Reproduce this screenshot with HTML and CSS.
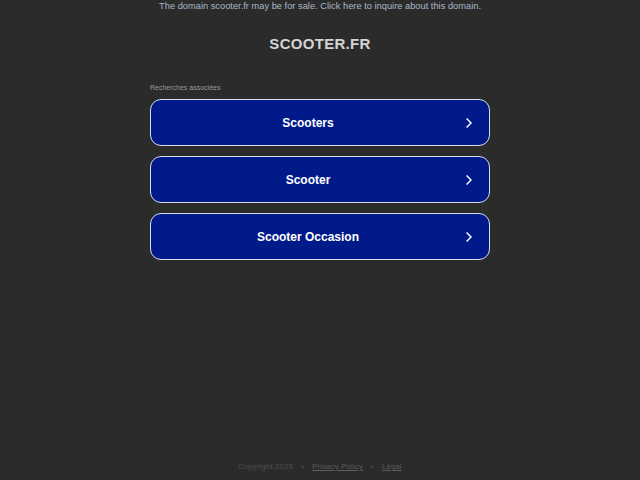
FILE: index.html
```html
<!DOCTYPE html>
<html lang="fr">
<head>
<meta charset="utf-8">
<title>scooter.fr</title>
<link rel="stylesheet" href="styles.css">
</head>
<body>
<div class="page">
  <div class="banner">The domain scooter.fr may be for sale. Click here to inquire about this domain.</div>
  <h1 class="title">SCOOTER.FR</h1>
  <div class="related">
    <div class="label">Recherches associées</div>
    <a class="btn" href="#"><span>Scooters</span><svg class="chev" viewBox="0 0 10 14" width="8" height="12"><path d="M2 1.5 L7.5 7 L2 12.5" fill="none" stroke="#fff" stroke-width="1.8"/></svg></a>
    <a class="btn" href="#"><span>Scooter</span><svg class="chev" viewBox="0 0 10 14" width="8" height="12"><path d="M2 1.5 L7.5 7 L2 12.5" fill="none" stroke="#fff" stroke-width="1.8"/></svg></a>
    <a class="btn" href="#"><span>Scooter Occasion</span><svg class="chev" viewBox="0 0 10 14" width="8" height="12"><path d="M2 1.5 L7.5 7 L2 12.5" fill="none" stroke="#fff" stroke-width="1.8"/></svg></a>
  </div>
  <div class="spacer"></div>
  <div class="footer">
    <span>Copyright 2025</span><span class="dot">•</span><a href="#">Privacy Policy</a><span class="dot">•</span><a href="#">Legal</a>
  </div>
</div>
</body>
</html>
```

FILE: styles.css
```css
html, body {
  margin: 0;
  padding: 0;
  background: #2b2b2b;
  height: 100%;
}
.page {
  display: flex;
  flex-direction: column;
  align-items: center;
  height: 480px;
  font-family: "Liberation Sans", Arial, sans-serif;
}
.banner {
  font-size: 9.3px;
  line-height: 12px;
  color: #a8b8c8;
}
.title {
  margin: 23px 0 0 0;
  font-size: 15px;
  line-height: 18px;
  font-weight: bold;
  color: #d4d4d4;
  letter-spacing: 0.3px;
}
.related {
  margin-top: 30px;
  width: 340px;
  display: flex;
  flex-direction: column;
  gap: 10px;
}
.label {
  font-size: 7px;
  line-height: 9px;
  color: #9a9a9a;
  margin-bottom: -3px;
}
.btn {
  display: flex;
  align-items: center;
  justify-content: center;
  position: relative;
  height: 45px;
  padding-right: 24px;
  border: 1px solid #d8dce8;
  border-radius: 11px;
  background: #011a8a;
  color: #fff;
  text-decoration: none;
  font-weight: bold;
  font-size: 12px;
}
.chev {
  position: absolute;
  right: 16px;
  top: 17px;
}
.spacer {
  flex: 1;
}
.footer {
  font-size: 7.5px;
  color: #4f4f4f;
  padding-bottom: 9px;
  letter-spacing: 0.3px;
  display: flex;
  gap: 8px;
}
.footer a {
  color: #5c5c5c;
}
```
